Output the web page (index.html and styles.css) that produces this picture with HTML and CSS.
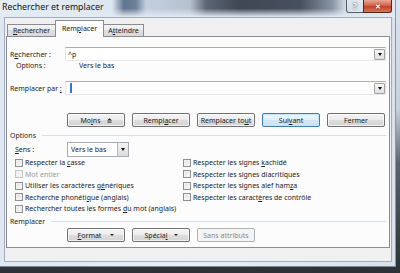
FILE: index.html
```html
<!DOCTYPE html>
<html lang="fr">
<head>
<meta charset="utf-8">
<title>Rechercher et remplacer</title>
<link rel="stylesheet" href="styles.css">
</head>
<body>
<div class="window">
  <div class="titlebar">
    <span class="title">Rechercher et remplacer</span>
    <div class="caption-buttons">
      <span class="cap-help">?</span>
      <span class="cap-close">✕</span>
    </div>
  </div>
  <div class="client">
    <div class="tabs">
      <div class="tab t1"><span><u>R</u>echercher</span></div>
      <div class="tab t2 active"><span>Rem<u>p</u>lacer</span></div>
      <div class="tab t3"><span>A<u>t</u>teindre</span></div>
    </div>
    <div class="panel">
      <div class="field-row find">
        <span class="field-label">R<u>e</u>chercher :</span>
        <div class="combo"><span class="combo-text">^p</span><span class="drop"><span class="tri"></span></span></div>
      </div>
      <div class="options-row"><span class="opt-label">Options :</span><span>Vers le bas</span></div>
      <div class="field-row replace">
        <span class="field-label">Remplacer par <u>:</u></span>
        <div class="combo"><span class="caret"></span><span class="drop"><span class="tri"></span></span></div>
      </div>
      <div class="button-row main-buttons">
        <span class="btn"><span>Mo<u>i</u>ns</span><svg class="less-icon" width="5" height="5" viewBox="0 0 5 5"><path d="M0 2.6 L2.5 0.2 L5 2.6 Z" fill="#222"/><rect x="0.5" y="3.6" width="4" height="1" fill="#222"/></svg></span>
        <span class="btn"><span>Rempl<u>a</u>cer</span></span>
        <span class="btn"><span>Remplacer to<u>u</u>t</span></span>
        <span class="btn default"><span>Sui<u>v</u>ant</span></span>
        <span class="btn"><span>Fermer</span></span>
      </div>
      <div class="group-head"><span>Options</span><span class="rule"></span></div>
      <div class="sens-row">
        <span class="sens-label"><u>S</u>ens :</span>
        <div class="select"><span>Vers le bas</span><span class="select-drop"><span class="tri"></span></span></div>
      </div>
      <div class="checks">
        <div class="check"><span class="box"></span><span>Respecter la <u>c</u>asse</span></div>
        <div class="check disabled"><span class="box"></span><span>Mot entier</span></div>
        <div class="check"><span class="box"></span><span>Utiliser les caractères g<u>é</u>nériques</span></div>
        <div class="check"><span class="box"></span><span>Recherche phonéti<u>q</u>ue (anglais)</span></div>
        <div class="check"><span class="box"></span><span>Rechercher toutes les formes <u>d</u>u mot (anglais)</span></div>
        <div class="check"><span class="box"></span><span>Respecter les signes <u>k</u>achidé</span></div>
        <div class="check"><span class="box"></span><span>Respecter les signes diacritiques</span></div>
        <div class="check"><span class="box"></span><span>Respecter les signes alef ham<u>z</u>a</span></div>
        <div class="check"><span class="box"></span><span>Respecter les caract<u>è</u>res de contrôle</span></div>
      </div>
      <div class="group-head rep"><span>Remplacer</span><span class="rule"></span></div>
      <div class="button-row bottom-buttons">
        <span class="btn"><span><u>F</u>ormat</span><span class="btn-tri wide"></span></span>
        <span class="btn"><span>Spécia<u>l</u></span><span class="btn-tri"></span></span>
        <span class="btn disabled"><span>Sans attributs</span></span>
      </div>
    </div>
  </div>
</div>
</body>
</html>
```

FILE: styles.css
```css
* { box-sizing: border-box; }
html, body { margin: 0; padding: 0; }
body {
  width: 400px;
  height: 273px;
  overflow: hidden;
  background: linear-gradient(to bottom, #dbe4ee 0, #c6d0db 40%, #5a616b 60%, #2c3036 100%);
  font-family: "Noto Sans", "Open Sans", sans-serif;
  font-size: 7px;
  line-height: 1;
  color: #1b1b1b;
}
u { text-decoration: underline; text-underline-offset: 1px; }

.window {
  width: 396px;
  height: 267px;
  display: flex;
  flex-direction: column;
  background: linear-gradient(to right, #dfe8f2, #e8eef5 50%, #d9e2ec);
  border-right: 1px solid #8d99a6;
  border-bottom: 1px solid #7d8894;
}

.titlebar {
  height: 17px;
  flex: none;
  display: flex;
  align-items: flex-start;
  background:
    linear-gradient(to bottom, rgba(226,234,243,0) 0, rgba(226,234,243,0) 50%, rgba(226,234,243,1) 100%),
    linear-gradient(to right, #e6edf5 0, #dce6f0 112px, #60768f 124px, #6c819a 136px, #c3cfdc 146px, #b7c2cf 190px, #5d6773 206px, #3e4752 240px, #47515d 300px, #8894a2 332px, #cdd7e2 345px, #dfe7f0 396px);
}
.title {
  padding: 3px 0 0 2px;
  font-size: 8.8px;
  color: #111;
}
.caption-buttons {
  margin-left: auto;
  margin-right: 3px;
  display: flex;
}
.cap-help {
  width: 17px;
  height: 13px;
  display: flex;
  align-items: center;
  justify-content: center;
  border: 1px solid rgba(30, 35, 45, 0.7);
  border-top: none;
  border-right: none;
  border-radius: 0 0 0 3px;
  background: linear-gradient(to bottom, rgba(255,255,255,0.35), rgba(255,255,255,0.1));
  color: #fff;
  font-weight: bold;
  font-size: 8px;
  text-shadow: 0 0 2px #000;
}
.cap-close {
  width: 29px;
  height: 13px;
  display: flex;
  align-items: center;
  justify-content: center;
  border: 1px solid #5c2418;
  border-top: none;
  border-radius: 0 0 3px 0;
  background: linear-gradient(to bottom, #e9a895 0, #d5634b 45%, #c5412a 55%, #d3785d 100%);
  color: #fff;
  font-size: 7px;
  font-weight: bold;
  text-shadow: 0 0 2px #5a1a10;
}

.client {
  flex: 1;
  margin: 0 3px 5px 4px;
  border: 1px solid #a2aebc;
  background: #f0f0f0;
  padding: 0 1px 13px 1px;
  display: flex;
  flex-direction: column;
}

.tabs {
  height: 18px;
  flex: none;
  display: flex;
  align-items: flex-end;
  padding-left: 1px;
}
.tab {
  height: 12px;
  display: flex;
  align-items: center;
  justify-content: center;
  border: 1px solid #898c95;
  border-bottom: none;
  background: linear-gradient(to bottom, #f3f3f3 0, #ebebeb 50%, #dedede 50%, #d9d9d9 100%);
  margin-right: -1px;
}
.t1 { width: 49px; }
.t2 { width: 49px; }
.t3 { width: 41px; }
.tab.active {
  height: 17px;
  margin-bottom: -1px;
  position: relative;
  z-index: 1;
  background: #fcfcfc;
  padding-bottom: 2px;
}

.panel {
  height: 212px;
  flex: none;
  border: 1px solid #898c95;
  background: #fcfcfc;
  padding: 0 3px;
  display: flex;
  flex-direction: column;
}

.field-row {
  display: flex;
  align-items: center;
  height: 14px;
  flex: none;
}
.find { margin-top: 10px; }
.replace { margin-top: 11px; }
.field-label { width: 55px; }
.combo {
  flex: 1;
  height: 14px;
  border: 1px solid;
  border-color: #abadb3 #dbdfe6 #e3e9ef #e2e3ea;
  background: #fff;
  display: flex;
  align-items: center;
  padding-left: 2px;
}
.caret {
  width: 2px;
  height: 10px;
  margin-left: 2px;
  background: #3a76c4;
}
.drop {
  margin-left: auto;
  width: 11px;
  height: 11px;
  border: 1px solid #a3a3a3;
  border-radius: 1px;
  background: linear-gradient(to bottom, #f6f6f6, #e0e0e0);
  display: flex;
  align-items: center;
  justify-content: center;
}
.tri {
  width: 0;
  height: 0;
  border-left: 2.5px solid transparent;
  border-right: 2.5px solid transparent;
  border-top: 3px solid #111;
}

.options-row {
  height: 9px;
  flex: none;
  display: flex;
  align-items: center;
  padding-left: 6px;
}
.opt-label { width: 63px; }

.button-row {
  display: flex;
  gap: 7px;
  padding-left: 57px;
  height: 14px;
  flex: none;
}
.main-buttons { margin-top: 18px; }
.bottom-buttons { margin-top: 1.5px; }
.btn {
  width: 58px;
  height: 14px;
  display: flex;
  align-items: center;
  justify-content: center;
  border: 1px solid #707070;
  border-radius: 2px;
  background: linear-gradient(to bottom, #f4f4f4 0, #ececec 50%, #dedede 50%, #d2d2d2 100%);
  box-shadow: inset 0 0 0 1px rgba(255,255,255,0.7);
  white-space: nowrap;
}
.btn.default {
  border-color: #3c7fb1;
  background: linear-gradient(to bottom, #eef6fc 0, #e2eff9 50%, #d3e6f5 50%, #cde2f3 100%);
  box-shadow: inset 0 0 0 1px #c6e5f9;
}
.btn.disabled {
  border-color: #adb2b5;
  background: #f4f4f4;
  box-shadow: none;
  color: #8a8a8a;
}
.less-icon { margin-left: 6px; }
.btn-tri {
  width: 0;
  height: 0;
  margin-left: 6px;
  border-left: 2px solid transparent;
  border-right: 2px solid transparent;
  border-top: 2.5px solid #222;
}
.btn-tri.wide { margin-left: 9px; }

.group-head {
  height: 10px;
  margin-top: 3px;
  display: flex;
  align-items: center;
  flex: none;
}
.group-head.rep { margin-top: 2px; }
.rule {
  flex: 1;
  height: 1px;
  margin-left: 6px;
  background: #d5dfe5;
}

.sens-row {
  margin-top: 2px;
  height: 15px;
  flex: none;
  display: flex;
  align-items: center;
  padding-left: 5px;
}
.sens-label { width: 52px; }
.select {
  width: 62px;
  height: 15px;
  border: 1px solid #a5acb5;
  background: #fff;
  display: flex;
  align-items: center;
  padding-left: 3px;
}
.select-drop {
  margin-left: auto;
  width: 11px;
  height: 13px;
  border-left: 1px solid #b5b5b5;
  background: linear-gradient(to bottom, #f4f4f4, #dcdcdc);
  display: flex;
  align-items: center;
  justify-content: center;
}

.checks {
  display: grid;
  grid-template-columns: 168px 1fr;
  grid-template-rows: repeat(5, 11.5px);
  grid-auto-flow: column;
  padding-left: 5px;
  flex: none;
}
.check {
  display: flex;
  align-items: center;
  gap: 2px;
  white-space: nowrap;
}
.box {
  width: 8px;
  height: 8px;
  flex: none;
  border: 1px solid #8e8f8f;
  background: linear-gradient(135deg, #d6d6d6 0, #eeeeee 50%, #fbfbfb 100%);
  box-shadow: inset 0 0 0 1px #f2f2f2;
}
.check.disabled { color: #9b9b9b; }
.check.disabled .box {
  border-color: #c4c4c4;
  background: #f3f3f3;
}
```
